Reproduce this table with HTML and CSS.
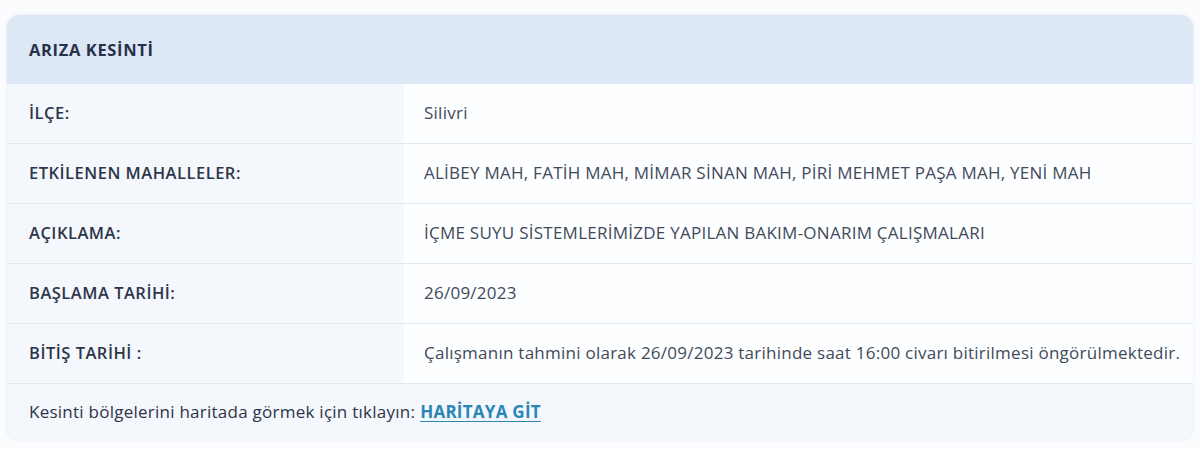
FILE: index.html
```html
<!DOCTYPE html>
<html lang="tr">
<head>
<meta charset="utf-8">
<link rel="stylesheet" href="styles.css">
</head>
<body>
<div class="card">
  <div class="card-header">ARIZA KESİNTİ</div>
  <div class="row">
    <div class="label">İLÇE:</div>
    <div class="value">Silivri</div>
  </div>
  <div class="row">
    <div class="label">ETKİLENEN MAHALLELER:</div>
    <div class="value">ALİBEY MAH, FATİH MAH, MİMAR SİNAN MAH, PİRİ MEHMET PAŞA MAH, YENİ MAH</div>
  </div>
  <div class="row">
    <div class="label">AÇIKLAMA:</div>
    <div class="value">İÇME SUYU SİSTEMLERİMİZDE YAPILAN BAKIM-ONARIM ÇALIŞMALARI</div>
  </div>
  <div class="row">
    <div class="label">BAŞLAMA TARİHİ:</div>
    <div class="value">26/09/2023</div>
  </div>
  <div class="row">
    <div class="label">BİTİŞ TARİHİ :</div>
    <div class="value">Çalışmanın tahmini olarak 26/09/2023 tarihinde saat 16:00 civarı bitirilmesi öngörülmektedir.</div>
  </div>
  <div class="card-footer">Kesinti bölgelerini haritada görmek için tıklayın: <a class="map-link" href="#">HARİTAYA GİT</a></div>
</div>
</body>
</html>
```
FILE: styles.css
```css
html, body {
  margin: 0;
  padding: 0;
}
body {
  background: #fbfcfe;
  font-family: "Open Sans", "Lato", sans-serif;
  padding: 15px 7px 11px 7px;
}
.card {
  background: #f4f7fb;
  border-radius: 12px;
  overflow: hidden;
  box-shadow: 0 0 3px rgba(180, 190, 210, 0.35);
}
.card-header {
  background: #dee7f5;
  height: 69px;
  display: flex;
  align-items: center;
  padding-left: 22px;
  font-size: 16.5px;
  font-weight: 700;
  letter-spacing: 0.65px;
  color: #26324a;
}
.row {
  display: flex;
  height: 59px;
  border-bottom: 1px solid #e3e7ee;
}
.row:first-of-type {
  height: 58px;
}
.label {
  width: 397px;
  flex: none;
  box-sizing: border-box;
  padding-left: 22px;
  padding-bottom: 2px;
  display: flex;
  align-items: center;
  font-size: 16.5px;
  font-weight: 600;
  letter-spacing: 0.5px;
  color: #2c3549;
  background: #f4f7fb;
}
.value {
  flex: 1;
  padding-left: 20px;
  padding-bottom: 2px;
  display: flex;
  align-items: center;
  font-size: 17px;
  letter-spacing: 0.25px;
  color: #414a5a;
  background: #fdfeff;
}
.card-footer {
  height: 54px;
  display: flex;
  align-items: center;
  padding-left: 22px;
  padding-bottom: 2px;
  font-size: 17px;
  letter-spacing: 0.25px;
  color: #2c3549;
  background: #f4f7fb;
}
.map-link {
  margin-left: 5px;
  color: #2a86b7;
  font-weight: 700;
  text-decoration: underline;
  text-underline-offset: 3px;
}
```
